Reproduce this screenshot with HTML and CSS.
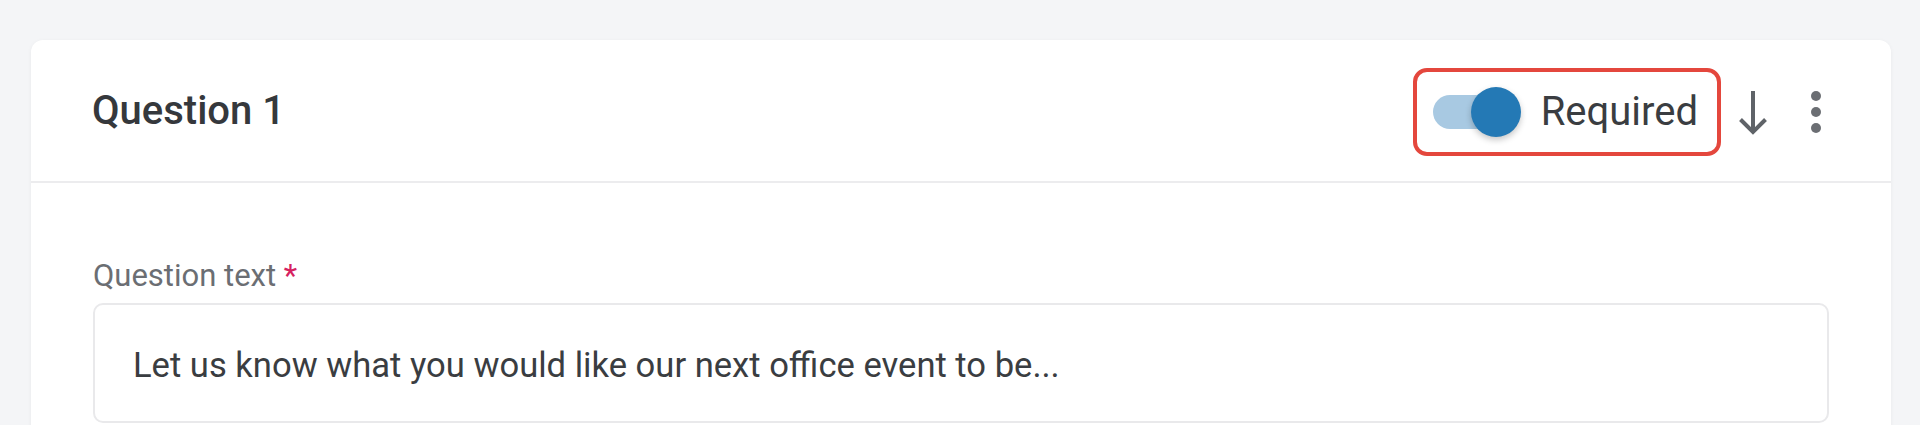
FILE: index.html
```html
<!DOCTYPE html>
<html lang="en">
<head>
<meta charset="utf-8">
<title>Question 1</title>
<link rel="stylesheet" href="styles.css">
</head>
<body>
<div class="page">
  <section class="card">
    <header class="card-header">
      <h2 class="title">Question 1</h2>
      <div class="actions">
        <label class="required-box">
          <span class="toggle">
            <span class="track"></span>
            <span class="knob"></span>
          </span>
          <span class="required-label">Required</span>
        </label>
        <svg class="icon-arrow" width="34" height="48" viewBox="0 0 34 48" aria-hidden="true">
          <path d="M17 3 V44 M4.5 31.5 L17 44 L29.5 31.5" fill="none" stroke="#5f6368" stroke-width="4" stroke-linejoin="miter"/>
        </svg>
        <svg class="icon-kebab" width="12" height="46" viewBox="0 0 12 46" aria-hidden="true">
          <circle cx="6" cy="7" r="5" fill="#6b6e73"/>
          <circle cx="6" cy="23" r="5" fill="#6b6e73"/>
          <circle cx="6" cy="39" r="5" fill="#6b6e73"/>
        </svg>
      </div>
    </header>
    <div class="card-body">
      <div class="field-label">Question text <span class="asterisk">*</span></div>
      <div class="input">Let us know what you would like our next office event to be...</div>
    </div>
  </section>
</div>
</body>
</html>
```

FILE: styles.css
```css
html, body {
  margin: 0;
  padding: 0;
  height: 425px;
  overflow: hidden;
  background: #f4f5f7;
  font-family: Roboto, "Liberation Sans", Arial, sans-serif;
}

.page {
  padding: 40px 29px 0 31px;
}

.card {
  background: #ffffff;
  border-radius: 12px;
  box-shadow: 0 1px 4px rgba(0, 0, 0, 0.05);
  height: 460px;
}

.card-header {
  height: 141px;
  border-bottom: 2px solid #ececee;
  display: flex;
  align-items: center;
  justify-content: space-between;
  padding-left: 61px;
}

.title {
  margin: 0;
  font-size: 40px;
  font-weight: 500;
  color: #35383c;
  line-height: 50px;
}

.actions {
  display: flex;
  align-items: center;
  padding-top: 2px;
}

.required-box {
  display: flex;
  align-items: center;
  border: 4px solid #e4473d;
  border-radius: 14px;
  padding: 15px 19px 15px 16px;
  gap: 20px;
}

.toggle {
  position: relative;
  width: 88px;
  height: 50px;
  display: block;
}

.track {
  position: absolute;
  left: 0;
  top: 8px;
  width: 80px;
  height: 34px;
  border-radius: 17px;
  background: #a8c9e2;
}

.knob {
  position: absolute;
  left: 38px;
  top: 0;
  width: 50px;
  height: 50px;
  border-radius: 50%;
  background: #2479b5;
  box-shadow: 0 3px 6px rgba(0, 0, 0, 0.22);
}

.required-label {
  font-size: 40px;
  line-height: 50px;
  color: #3a3d41;
}

.icon-arrow {
  display: block;
  margin-left: 15px;
}

.icon-kebab {
  display: block;
  margin-left: 40px;
  margin-right: 69px;
}

.card-body {
  padding: 73px 62px 0 62px;
}

.field-label {
  font-size: 31px;
  line-height: 40px;
  color: #6b6e73;
  margin-bottom: 7px;
}

.asterisk {
  color: #d6225f;
}

.input {
  height: 116px;
  border: 2px solid #e9e9eb;
  border-radius: 10px;
  padding-left: 38px;
  padding-top: 4px;
  box-sizing: border-box;
  height: 120px;
  display: flex;
  align-items: center;
  font-size: 34.6px;
  color: #3a3d41;
}
```
